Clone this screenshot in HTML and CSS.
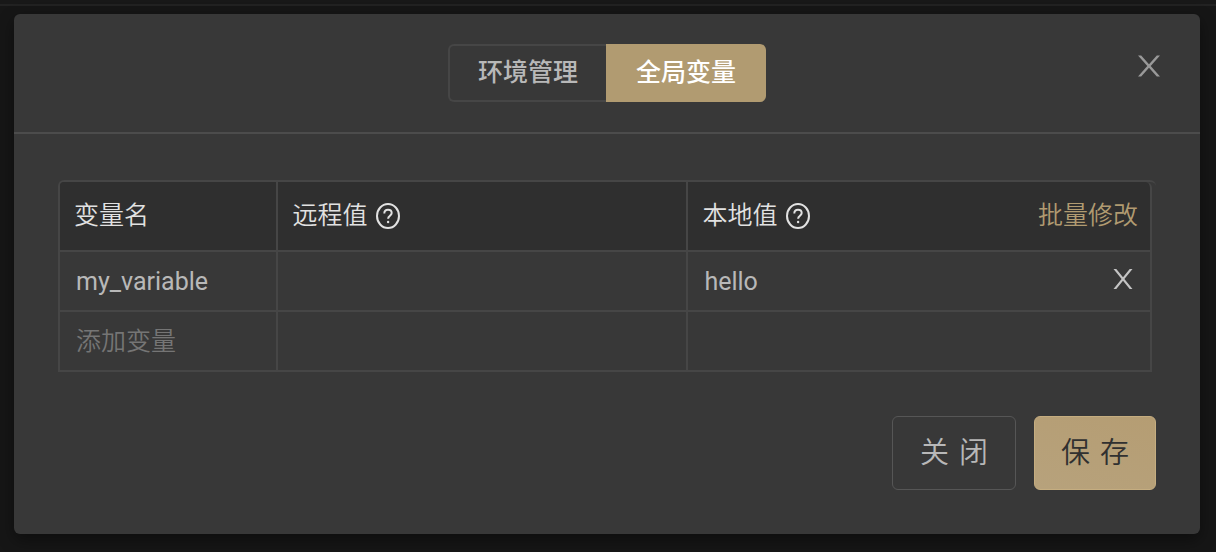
FILE: index.html
```
<!DOCTYPE html>
<html lang="zh-CN">
<head>
<meta charset="utf-8">
<meta name="viewport" content="width=device-width, initial-scale=1">
<title>全局变量</title>
<link rel="stylesheet" href="styles.css">
</head>
<body>
<div class="page">
  <section class="modal" role="dialog" aria-label="全局变量">
    <header class="modal-header">
      <div class="tabs" role="tablist">
        <button class="tab" type="button" role="tab" aria-selected="false">环境管理</button>
        <button class="tab tab-active" type="button" role="tab" aria-selected="true">全局变量</button>
      </div>
      <button class="icon-button modal-close" type="button" aria-label="关闭窗口">
        <svg width="22" height="22" viewBox="0 0 22 22"><path d="M0 .5H3.2L11 9.3 18.8 .5H22L12.7 11 22 21.5H18.8L11 12.7 3.2 21.5H0L9.3 11Z"/></svg>
      </button>
    </header>
    <div class="modal-body">
      <div class="table-wrap">
        <table class="variables">
          <colgroup><col class="col-name"><col class="col-remote"><col></colgroup>
          <thead>
            <tr>
              <th scope="col">变量名</th>
              <th scope="col"><span class="heading">远程值
                <svg class="help" viewBox="0 0 26 26"><ellipse cx="13" cy="13" rx="11" ry="12"/><path d="M9.3 10.4C9.3 8 10.8 6.7 13 6.7S16.7 8 16.7 10.1C16.7 12.7 13.1 12.9 13.1 15.8"/><circle class="help-dot" cx="13.1" cy="19" r="1.2"/></svg></span>
              </th>
              <th scope="col">
                <span class="heading-row"><span class="heading">本地值
                  <svg class="help" viewBox="0 0 26 26"><ellipse cx="13" cy="13" rx="11" ry="12"/><path d="M9.3 10.4C9.3 8 10.8 6.7 13 6.7S16.7 8 16.7 10.1C16.7 12.7 13.1 12.9 13.1 15.8"/><circle class="help-dot" cx="13.1" cy="19" r="1.2"/></svg></span>
                <a class="bulk-edit" href="#">批量修改</a></span>
              </th>
            </tr>
          </thead>
          <tbody>
            <tr>
              <td><input class="field" type="text" value="my_variable" aria-label="变量名"></td>
              <td><input class="field" type="text" aria-label="远程值"></td>
              <td>
                <div class="field-row">
                  <input class="field" type="text" value="hello" aria-label="本地值">
                  <button class="icon-button row-remove" type="button" aria-label="删除变量">
                    <svg width="20" height="22" viewBox="0 0 20 22"><path d="M.5 1H3.3L10 9.2 16.7 1H19.5L11.4 11 19.5 21H16.7L10 12.8 3.3 21H.5L8.6 11Z"/></svg>
                  </button>
                </div>
              </td>
            </tr>
            <tr>
              <td><input class="field" type="text" placeholder="添加变量" aria-label="添加变量"></td>
              <td><input class="field" type="text" aria-label="新变量远程值"></td>
              <td><input class="field" type="text" aria-label="新变量本地值"></td>
            </tr>
          </tbody>
        </table>
      </div>
    </div>
    <footer class="modal-footer">
      <button class="button" type="button"><span>关</span> <span>闭</span></button>
      <button class="button button-primary" type="button"><span>保</span> <span>存</span></button>
    </footer>
  </section>
</div>
</body>
</html>
```
FILE: styles.css
```
* {
  box-sizing: border-box;
}

body {
  margin: 0;
  background: #161616;
  color: #b8b8b8;
  font-family: Roboto, "Noto Sans CJK SC", sans-serif;
  font-size: 25px;
  line-height: 36px;
}

button,
input {
  margin: 0;
  font: inherit;
  color: inherit;
}

button {
  cursor: pointer;
}

.page {
  min-height: 100vh;
  padding: 8px 16px 18px 14px;
  border-top: 6px solid #181818;
  border-image: linear-gradient(#181818 4px, #222 4px) 6;
}

.modal {
  background: #383838;
  border-radius: 6px;
  box-shadow: 0 6px 16px rgba(0, 0, 0, 0.4);
}

.modal-header {
  display: grid;
  grid-template-columns: 1fr auto 1fr;
  align-items: start;
  padding: 30px;
  border-bottom: 2px solid #4c4c4c;
}

.tabs {
  grid-column: 2;
  display: flex;
}

.tab {
  height: 58px;
  padding: 0 28px;
  border: 2px solid #464646;
  border-right: 0;
  border-radius: 6px 0 0 6px;
  background: transparent;
  font-weight: 500;
}

.tab-active {
  padding: 0 30px;
  border: 0;
  border-radius: 0 6px 6px 0;
  background: #b19b71;
  color: #fff;
}

.icon-button {
  display: flex;
  align-items: center;
  justify-content: center;
  flex: none;
  padding: 0;
  border: 0;
  background: none;
  fill: currentColor;
}

.modal-close {
  justify-self: end;
  width: 42px;
  height: 44px;
  color: #999;
}

.modal-body {
  padding: 46px 44px 44px;
}

.table-wrap {
  padding-right: 4px;
  border: 2px solid #464646;
  border-right: 0;
  border-bottom: 0;
  border-radius: 6px 6px 0 0;
}

.variables {
  width: 100%;
  table-layout: fixed;
  border-collapse: separate;
  border-spacing: 0;
}

.col-name {
  width: 20%;
}

.col-remote {
  width: 410px;
}

.variables th,
.variables td {
  padding: 0;
  border-right: 2px solid #464646;
  border-bottom: 2px solid #464646;
}

.variables th {
  height: 70px;
  padding: 0 12px 0 14px;
  background: #2f2f2f;
  color: #e2e2e2;
  font-weight: 350;
  text-align: left;
}

.variables th:first-child {
  border-top-left-radius: 4px;
}

.variables th:last-child {
  border-top-right-radius: 6px;
}

.variables td {
  height: 60px;
}

.heading {
  display: flex;
  align-items: center;
  gap: 8px;
}

.heading-row {
  display: flex;
  align-items: center;
  justify-content: space-between;
}

.help {
  width: 26px;
  height: 26px;
  fill: none;
  stroke: #e2e2e2;
  stroke-width: 2;
}

.help .help-dot {
  fill: #e2e2e2;
  stroke: none;
}

.bulk-edit {
  color: #b19b71;
  text-decoration: none;
}

.field-row {
  display: flex;
  align-items: flex-start;
}

.field {
  display: block;
  width: 100%;
  min-width: 0;
  height: 58px;
  padding: 0 16px;
  border: 0;
  outline: 0;
  background: transparent;
  font-weight: 400;
}

.field::placeholder {
  color: #757575;
  font-weight: 350;
  opacity: 1;
}

.row-remove {
  width: 54px;
  height: 54px;
  color: #c4c4c4;
}

.modal-footer {
  display: flex;
  justify-content: flex-end;
  gap: 18px;
  padding: 0 44px 44px;
}

.button {
  display: flex;
  align-items: center;
  gap: 10px;
  height: 74px;
  padding: 0 27px;
  border: 1px solid #565656;
  border-radius: 6px;
  background: transparent;
  font-size: 29px;
  font-weight: 350;
}

.button-primary {
  padding: 0 26px;
  border-color: #c5ad80;
  background: linear-gradient(20deg, #b7a27c, #b59d73);
  color: #303030;
}
```
